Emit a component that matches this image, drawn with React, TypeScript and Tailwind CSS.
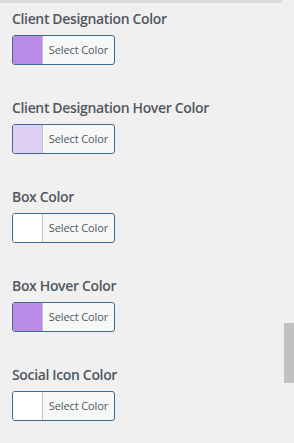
const fields = [
  { label: "Client Designation Color", color: "bg-[#b98ae6]" },
  { label: "Client Designation Hover Color", color: "bg-[#dccff3]" },
  { label: "Box Color", color: "bg-white" },
  { label: "Box Hover Color", color: "bg-[#b98ae6]" },
  { label: "Social Icon Color", color: "bg-white" },
];

const ColorButton = ({ color }: { color: string }) => (
  <button
    type="button"
    className="flex h-[30px] w-[103px] overflow-hidden rounded-[3px] border border-[#3d6a93] bg-[#f6f7f7]"
  >
    <span className={`h-full w-[30px] border-r border-[#c3c4c7] ${color}`} />
    <span className="flex h-full flex-1 items-center justify-center text-[11px] tracking-[-0.1px] text-[#50575e] font-['Open_Sans',sans-serif]">
      Select Color
    </span>
  </button>
);

export default function App() {
  return (
    <div className="relative h-[443px] w-[294px] overflow-hidden bg-[#f0f0f1] font-['Open_Sans',sans-serif]">
      <div className="h-[3px] w-[282px] bg-[#dcdcde]" />
      <div className="flex flex-col gap-[33px] px-3 pt-[6px]">
        {fields.map((f) => (
          <div key={f.label} className="flex flex-col gap-[6px]">
            <label className="text-[14px] leading-5 font-semibold tracking-[-0.35px] text-[#50575e]">
              {f.label}
            </label>
            <ColorButton color={f.color} />
          </div>
        ))}
      </div>
      {/* scrollbar thumb */}
      <div className="absolute top-[323px] right-0 h-[60px] w-[10px] bg-[#c1c1c1]" />
    </div>
  );
}
